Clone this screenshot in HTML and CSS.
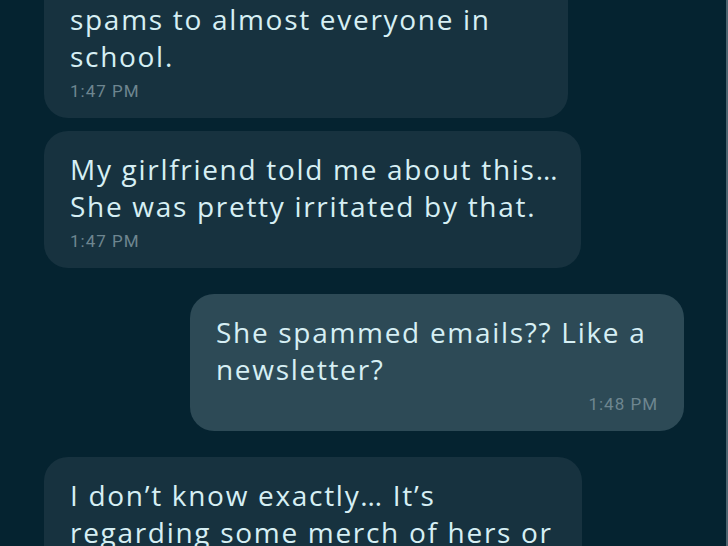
FILE: index.html
```html
<!DOCTYPE html>
<html>
<head>
<meta charset="utf-8">
<title>Chat</title>
<link rel="stylesheet" href="styles.css">
</head>
<body>
<div class="chat">
	<div class="msg in first w524">
		<p class="text">spams to almost everyone in<br>school.</p>
		<span class="time">1:47 PM</span>
	</div>
	<div class="msg in w537">
		<p class="text">My girlfriend told me about this…<br>She was pretty irritated by that.</p>
		<span class="time">1:47 PM</span>
	</div>
	<div class="msg out w494">
		<p class="text">She spammed emails?? Like a<br>newsletter?</p>
		<span class="time">1:48 PM</span>
	</div>
	<div class="msg in w538">
		<p class="text">I don’t know exactly… It’s<br>regarding some merch of hers or</p>
		<span class="time">1:48 PM</span>
	</div>
</div>
</body>
</html>
```

FILE: styles.css
```css
html,body{margin: 0;height: 100%;}
body{background-color: #052330;overflow: hidden;border-right: 2px solid #4d6470;box-sizing: border-box;}

.chat{display: flex;flex-direction: column;align-items: flex-start;padding: 0 42px 0 44px;margin-top: -59px;}
.msg{display: flex;flex-direction: column;box-sizing: border-box;padding: 20px 26px 15px;border-radius: 24px;background-color: #17323f;margin-bottom: 26px;}
.msg.in + .msg.in{margin-top: -13px;}
.msg.first{padding-top: 60px;}
.msg.out{align-self: flex-end;background-color: #2d4a56;}

.w524{width: 524px;}
.w537{width: 537px;}
.w494{width: 494px;}
.w538{width: 538px;}

.text{margin: 0;font-family: "Open Sans", "Liberation Sans", sans-serif;font-size: 28px;line-height: 37px;color: #d6eff4;white-space: nowrap;letter-spacing: 1.7px;}
.time{margin-top: 4px;font-family: Roboto, "Liberation Sans", sans-serif;font-size: 17px;line-height: 24px;color: #6e8690;letter-spacing: 1px;}
.out .time{align-self: flex-end;}
```
